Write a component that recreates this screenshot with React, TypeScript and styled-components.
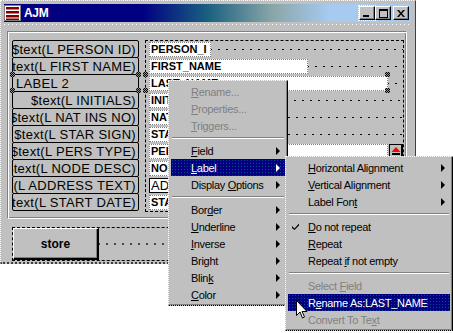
import React from "react";
import styled, { createGlobalStyle } from "styled-components";

const GlobalStyle = createGlobalStyle`
  html, body {
    margin: 0;
    padding: 0;
    background: #ffffff;
  }
  body {
    font-family: "Liberation Sans", Arial, sans-serif;
  }
`;

const labels = [
  { text: "$text(L PERSON ID)" },
  { text: "$text(L FIRST NAME)" },
  { text: "LABEL 2", left: true },
  { text: "$text(L INITIALS)" },
  { text: "$text(L NAT INS NO)" },
  { text: "$text(L STAR SIGN)" },
  { text: "$text(L PERS TYPE)" },
  { text: "$text(L NODE DESC)" },
  { text: "$text(L ADDRESS TEXT)" },
  { text: "$text(L START DATE)" },
];

const fields = [
  { text: "PERSON_I", width: 62 },
  { text: "FIRST_NAME", width: 159 },
  { text: "LAST_NAME", width: 239 },
  { text: "INITIALS", width: 90 },
  { text: "NAT_INS_NO", width: 100 },
  { text: "STAR_SIGN", width: 100 },
  { text: "PERS_TYPE", width: 239, scroll: true },
  { text: "NODE_DESC", width: 120 },
  { text: "ADDRESS", width: 120, boxed: true },
  { text: "START_DATE", width: 100 },
];

const handles = [
  [10, 72], [136, 72], [10, 88], [136, 88],
  [143, 72], [143, 88], [385, 72], [385, 88],
];

function App() {
  return (
    <>
      <GlobalStyle />
      <Screen>
        <Window>
          <TitleBar>
            <svg width="17" height="16" viewBox="0 0 17 16">
              <rect x="0.5" y="0.5" width="16" height="15" fill="#ffffff" stroke="#808080" />
              <rect x="2" y="2" width="13" height="2.5" fill="#800000" />
              <rect x="2" y="6" width="13" height="2.5" fill="#800000" />
              <rect x="2" y="10" width="13" height="2.5" fill="#800000" />
              <rect x="2" y="13.5" width="13" height="1.5" fill="#800000" />
            </svg>
            <Title>AJM</Title>
            <CaptionButtons>
              <CaptionButton $focus>
                <svg width="8" height="8" viewBox="0 0 8 8">
                  <rect x="0" y="6" width="6" height="2" fill="#000" />
                </svg>
              </CaptionButton>
              <CaptionButton>
                <svg width="9" height="9" viewBox="0 0 9 9">
                  <rect x="0.5" y="0.5" width="8" height="8" fill="none" stroke="#000" />
                  <rect x="0" y="0" width="9" height="2" fill="#000" />
                </svg>
              </CaptionButton>
              <CaptionButton $gap>
                <svg width="8" height="7" viewBox="0 0 8 7">
                  <path d="M0 0 H2 L4 2.5 L6 0 H8 L5 3.5 L8 7 H6 L4 4.5 L2 7 H0 L3 3.5 Z" fill="#000" />
                </svg>
              </CaptionButton>
            </CaptionButtons>
          </TitleBar>
          <DotRule />
          <Panel>
            <LabelColumn>
              {labels.map((l, i) => (
                <Label key={i} $left={l.left}>
                  {l.text}
                </Label>
              ))}
            </LabelColumn>
            <FieldArea>
              {fields.map((f, i) => (
                <Row key={i}>
                  <Field $width={f.width} $boxed={f.boxed}>
                    {f.text}
                  </Field>
                  {f.scroll ? (
                    <ScrollArrow>
                      <svg width="10" height="9" viewBox="0 0 10 9">
                        <path d="M5 0 L9.5 5 H0.5 Z" fill="#ff0000" />
                        <rect x="1" y="6" width="8" height="2" fill="#000" />
                      </svg>
                    </ScrollArrow>
                  ) : (
                    <Filler />
                  )}
                </Row>
              ))}
            </FieldArea>
          </Panel>
          <Footer>
            <StoreButton>store</StoreButton>
            <Filler />
          </Footer>
        </Window>

        {handles.map(([x, y], i) => (
          <Handle key={i} $x={x} $y={y} />
        ))}

        <Menu $x={168} $y={80} $w={120}>
          <Item $disabled><CheckSlot /><Text><u>R</u>ename...</Text></Item>
          <Item $disabled><CheckSlot /><Text><u>P</u>roperties...</Text></Item>
          <Item $disabled><CheckSlot /><Text><u>T</u>riggers...</Text></Item>
          <Separator />
          <Item><CheckSlot /><Text><u>F</u>ield</Text><Arrow /></Item>
          <Item $active><CheckSlot /><Text><u>L</u>abel</Text><Arrow /></Item>
          <Item><CheckSlot /><Text>Display <u>O</u>ptions</Text><Arrow /></Item>
          <Separator />
          <Item><CheckSlot /><Text>Bor<u>d</u>er</Text><Arrow /></Item>
          <Item><CheckSlot /><Text><u>U</u>nderline</Text><Arrow /></Item>
          <Item><CheckSlot /><Text><u>I</u>nverse</Text><Arrow /></Item>
          <Item><CheckSlot /><Text>Bri<u>g</u>ht</Text><Arrow /></Item>
          <Item><CheckSlot /><Text>Blin<u>k</u></Text><Arrow /></Item>
          <Item><CheckSlot /><Text><u>C</u>olor</Text><Arrow /></Item>
        </Menu>

        <Menu $x={285} $y={156} $w={168}>
          <Item><CheckSlot /><Text><u>H</u>orizontal Alignment</Text><Arrow /></Item>
          <Item><CheckSlot /><Text><u>V</u>ertical Alignment</Text><Arrow /></Item>
          <Item><CheckSlot /><Text>Label Fon<u>t</u></Text><Arrow /></Item>
          <Separator />
          <Item>
            <CheckSlot>
              <svg width="7" height="7" viewBox="0 0 7 7">
                <path d="M0 3 L2.5 5.5 L7 0.5 V2.5 L2.5 7 L0 5 Z" fill="#000" />
              </svg>
            </CheckSlot>
            <Text><u>D</u>o not repeat</Text>
          </Item>
          <Item><CheckSlot /><Text><u>R</u>epeat</Text></Item>
          <Item><CheckSlot /><Text>Repeat <u>i</u>f not empty</Text></Item>
          <Separator />
          <Item $disabled><CheckSlot /><Text>Select <u>F</u>ield</Text></Item>
          <Item $active><CheckSlot /><Text>R<u>e</u>name As:LAST_NAME</Text></Item>
          <Item $disabled><CheckSlot /><Text>Convert To Te<u>x</u>t</Text></Item>
        </Menu>

        <Cursor width="12" height="19" viewBox="0 0 12 19">
          <path
            d="M0.5 0.5 V15.5 L4 12 L6.5 18 L8.5 17 L6 11.5 H11 Z"
            fill="#ffffff"
            stroke="#000000"
            strokeWidth="1"
          />
        </Cursor>
      </Screen>
    </>
  );
}

const Screen = styled.div`
  position: relative;
  width: 453px;
  height: 333px;
  overflow: hidden;
  background: #ffffff;
  font-family: "Liberation Sans", Arial, sans-serif;
`;

const Window = styled.div`
  width: 416px;
  height: 264px;
  box-sizing: border-box;
  background: #c0c0c0;
  border-top: 1px dotted #ffffff;
  border-left: 1px dotted #ffffff;
  border-right: 1px solid #404040;
  border-bottom: 2px dotted #404040;
  padding: 3px 3px 0 3px;
  display: flex;
  flex-direction: column;
`;

const TitleBar = styled.div`
  height: 18px;
  margin-right: 1px;
  display: flex;
  align-items: center;
  padding: 0 2px 0 0;
  background: linear-gradient(
    to right,
    #000080 0%,
    #000080 34%,
    #1a6080 50%,
    #8aa6a8 66%,
    #a6caf0 80%,
    #a6caf0 100%
  );
`;

const Title = styled.span`
  margin-left: 3px;
  color: #ffffff;
  font-weight: bold;
  font-size: 12px;
  letter-spacing: -0.3px;
`;

const CaptionButtons = styled.div`
  margin-left: auto;
  display: flex;
  align-items: center;
`;

const CaptionButton = styled.div<{ $gap?: boolean; $focus?: boolean }>`
  width: 16px;
  height: 14px;
  box-sizing: border-box;
  margin-left: ${(p) => (p.$gap ? "2px" : "0")};
  background: #c0c0c0;
  border-top: 1px solid #ffffff;
  border-left: 1px solid #ffffff;
  border-right: 1px solid #000000;
  border-bottom: 1px solid #000000;
  box-shadow: inset -1px -1px #808080;
  outline: ${(p) => (p.$focus ? "1px dotted #ffffff" : "none")};
  display: flex;
  align-items: center;
  justify-content: center;
`;

const DotRule = styled.div`
  height: 1px;
  margin: 2px 0 6px;
  background-image: repeating-linear-gradient(
    to right,
    #ffffff 0 1px,
    transparent 1px 4px
  );
`;

const Panel = styled.div`
  margin-left: 3px;
  width: 400px;
  height: 188px;
  box-sizing: border-box;
  border-top: 1px solid #808080;
  border-left: 1px solid #808080;
  border-right: 1px solid #ffffff;
  border-bottom: 1px solid #ffffff;
  box-shadow: inset 1px 1px #ffffff, inset -1px -1px #808080;
  padding: 8px 2px 0 4px;
  display: flex;
  gap: 6px;
  align-items: flex-start;
`;

const LabelColumn = styled.div`
  width: 127px;
  display: flex;
  flex-direction: column;
`;

const Label = styled.div<{ $left?: boolean }>`
  height: 18px;
  margin-bottom: -1px;
  box-sizing: border-box;
  border: 1px solid #000000;
  border-radius: 2px;
  display: flex;
  align-items: center;
  justify-content: ${(p) => (p.$left ? "flex-start" : "flex-end")};
  padding: ${(p) => (p.$left ? "0 2px 0 3px" : "0 2px")};
  overflow: hidden;
  white-space: nowrap;
  font-size: 13px;
  letter-spacing: 0.3px;
  color: #000000;
`;

const FieldArea = styled.div`
  width: 259px;
  height: 172px;
  box-sizing: border-box;
  border: 1px dashed #000000;
  padding-left: 3px;
  display: flex;
  flex-direction: column;
`;

const Row = styled.div`
  height: 17px;
  display: flex;
  align-items: flex-start;
`;

const Field = styled.div<{ $width: number; $boxed?: boolean }>`
  width: ${(p) => p.$width}px;
  flex: none;
  height: 15px;
  margin-top: 1px;
  box-sizing: border-box;
  background: #ffffff;
  border: ${(p) => (p.$boxed ? "1px solid #000000" : "1px dotted #808080")};
  padding-left: 1px;
  overflow: hidden;
  white-space: nowrap;
  font-size: ${(p) => (p.$boxed ? "13px" : "11px")};
  font-weight: ${(p) => (p.$boxed ? "normal" : "bold")};
  line-height: 13px;
  color: #000000;
`;

const Filler = styled.div`
  flex: 1;
  align-self: stretch;
  background-image: radial-gradient(circle, #000000 0.6px, transparent 0.9px);
  background-size: 8px 100%;
  background-position: 4px center;
`;

const ScrollArrow = styled.div`
  width: 14px;
  height: 14px;
  margin: 1px 0 0 1px;
  box-sizing: border-box;
  border: 1px solid #000000;
  border-right-width: 2px;
  background: #c0c0c0;
  display: flex;
  align-items: center;
  justify-content: center;
`;

const Footer = styled.div`
  margin: 8px 0 0 8px;
  width: 392px;
  height: 34px;
  box-sizing: border-box;
  border: 1px dashed #000000;
  display: flex;
`;

const StoreButton = styled.div`
  width: 86px;
  box-sizing: border-box;
  background: #c0c0c0;
  border-top: 1px solid #ffffff;
  border-left: 1px solid #ffffff;
  border-right: 2px solid #000000;
  border-bottom: 2px solid #000000;
  box-shadow: inset -1px -1px #808080;
  display: flex;
  align-items: center;
  justify-content: center;
  font-size: 12px;
  font-weight: bold;
  color: #000000;
`;

const Handle = styled.div<{ $x: number; $y: number }>`
  position: absolute;
  left: ${(p) => p.$x}px;
  top: ${(p) => p.$y}px;
  width: 5px;
  height: 5px;
  background: repeating-conic-gradient(#000000 0 25%, #909090 0 50%) 0 0 / 2px 2px;
`;

const Menu = styled.div<{ $x: number; $y: number; $w: number }>`
  position: absolute;
  left: ${(p) => p.$x}px;
  top: ${(p) => p.$y}px;
  width: ${(p) => p.$w}px;
  box-sizing: border-box;
  background: #c0c0c0;
  border-top: 1px dotted #ffffff;
  border-left: 1px dotted #ffffff;
  border-right: 1px solid #000000;
  border-bottom: 1px dotted #000000;
  box-shadow: inset -1px -1px #808080;
  padding: 2px;
  font-size: 11px;
  letter-spacing: -0.3px;
`;

const Item = styled.div<{ $active?: boolean; $disabled?: boolean }>`
  height: 17px;
  display: flex;
  align-items: center;
  white-space: nowrap;
  color: ${(p) => (p.$active ? "#ffffff" : p.$disabled ? "#808080" : "#000000")};
  background: ${(p) =>
    p.$active
      ? "#000080 radial-gradient(circle, rgba(0, 140, 140, 0.55) 0.6px, transparent 0.9px) 0 0 / 3px 3px"
      : "transparent"};
  u {
    text-decoration-thickness: 1px;
    text-underline-offset: 1px;
  }
`;

const Text = styled.span`
  white-space: pre;
`;

const CheckSlot = styled.span`
  width: 20px;
  flex: none;
  display: flex;
  align-items: center;
  padding-left: 4px;
  box-sizing: border-box;
`;

const Arrow = styled.span`
  margin-left: auto;
  margin-right: 5px;
  width: 0;
  height: 0;
  border-left: 4px solid currentColor;
  border-top: 4px solid transparent;
  border-bottom: 4px solid transparent;
`;

const Separator = styled.div`
  margin: 3px 1px;
  border-top: 1px solid #808080;
  border-bottom: 1px solid #ffffff;
`;

const Cursor = styled.svg`
  position: absolute;
  left: 296px;
  top: 300px;
`;

export default App;
